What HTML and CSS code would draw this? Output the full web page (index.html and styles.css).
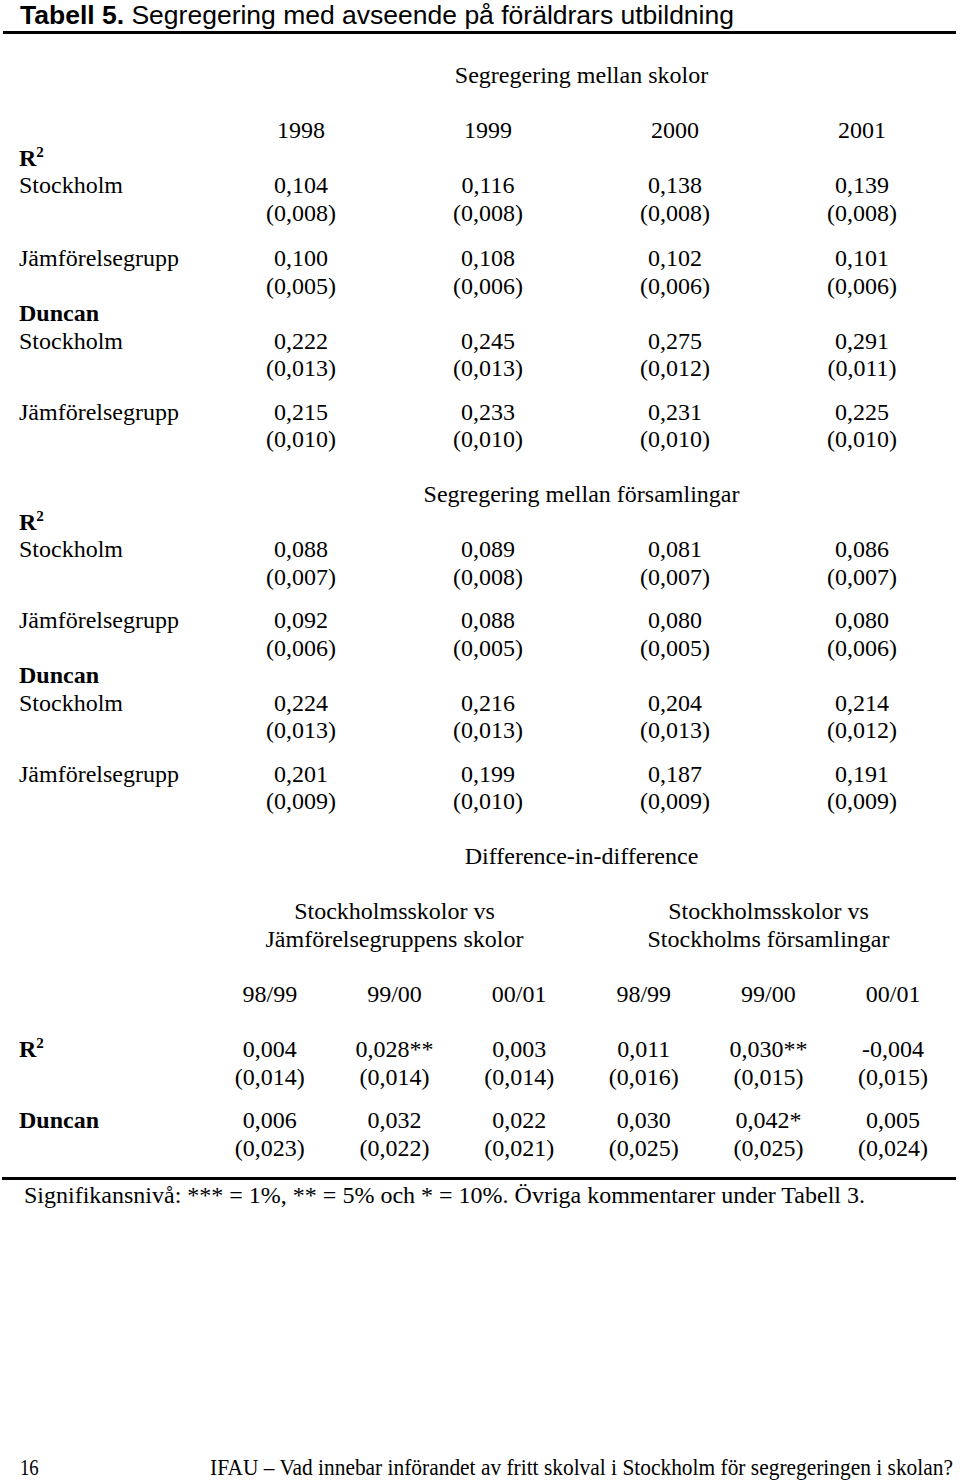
FILE: index.html
```html
<!DOCTYPE html>
<html lang="sv">
<head>
<meta charset="utf-8">
<title>Tabell 5</title>
<link rel="stylesheet" href="styles.css">
</head>
<body>
<div class="page">
  <h1 class="title"><b>Tabell 5.</b> Segregering med avseende på föräldrars utbildning</h1>

  <div class="r4 sechead mt28"><div></div><div class="span4">Segregering mellan skolor</div></div>
  <div class="r4 mt27"><div></div><div class="v">1998</div><div class="v">1999</div><div class="v">2000</div><div class="v">2001</div></div>
  <div class="r4"><div class="lab b">R<sup>2</sup></div></div>
  <div class="r4"><div class="lab">Stockholm</div><div class="v">0,104<br>(0,008)</div><div class="v">0,116<br>(0,008)</div><div class="v">0,138<br>(0,008)</div><div class="v">0,139<br>(0,008)</div></div>
  <div class="r4 mt18"><div class="lab">Jämförelsegrupp</div><div class="v">0,100<br>(0,005)</div><div class="v">0,108<br>(0,006)</div><div class="v">0,102<br>(0,006)</div><div class="v">0,101<br>(0,006)</div></div>
  <div class="r4"><div class="lab b">Duncan</div></div>
  <div class="r4"><div class="lab">Stockholm</div><div class="v">0,222<br>(0,013)</div><div class="v">0,245<br>(0,013)</div><div class="v">0,275<br>(0,012)</div><div class="v">0,291<br>(0,011)</div></div>
  <div class="r4 mt16"><div class="lab">Jämförelsegrupp</div><div class="v">0,215<br>(0,010)</div><div class="v">0,233<br>(0,010)</div><div class="v">0,231<br>(0,010)</div><div class="v">0,225<br>(0,010)</div></div>

  <div class="r4 sechead mt27"><div></div><div class="span4">Segregering mellan församlingar</div></div>
  <div class="r4"><div class="lab b">R<sup>2</sup></div></div>
  <div class="r4"><div class="lab">Stockholm</div><div class="v">0,088<br>(0,007)</div><div class="v">0,089<br>(0,008)</div><div class="v">0,081<br>(0,007)</div><div class="v">0,086<br>(0,007)</div></div>
  <div class="r4 mt16"><div class="lab">Jämförelsegrupp</div><div class="v">0,092<br>(0,006)</div><div class="v">0,088<br>(0,005)</div><div class="v">0,080<br>(0,005)</div><div class="v">0,080<br>(0,006)</div></div>
  <div class="r4"><div class="lab b">Duncan</div></div>
  <div class="r4"><div class="lab">Stockholm</div><div class="v">0,224<br>(0,013)</div><div class="v">0,216<br>(0,013)</div><div class="v">0,204<br>(0,013)</div><div class="v">0,214<br>(0,012)</div></div>
  <div class="r4 mt16"><div class="lab">Jämförelsegrupp</div><div class="v">0,201<br>(0,009)</div><div class="v">0,199<br>(0,010)</div><div class="v">0,187<br>(0,009)</div><div class="v">0,191<br>(0,009)</div></div>

  <div class="r4 sechead mt27"><div></div><div class="span4">Difference-in-difference</div></div>
  <div class="r2 mt27"><div></div><div class="v">Stockholmsskolor vs<br>Jämförelsegruppens skolor</div><div class="v">Stockholmsskolor vs<br>Stockholms församlingar</div></div>
  <div class="r6 mt28"><div></div><div class="v">98/99</div><div class="v">99/00</div><div class="v">00/01</div><div class="v">98/99</div><div class="v">99/00</div><div class="v">00/01</div></div>
  <div class="r6 mt27"><div class="lab b">R<sup>2</sup></div><div class="v">0,004<br>(0,014)</div><div class="v">0,028**<br>(0,014)</div><div class="v">0,003<br>(0,014)</div><div class="v">0,011<br>(0,016)</div><div class="v">0,030**<br>(0,015)</div><div class="v">-0,004<br>(0,015)</div></div>
  <div class="r6 mt16"><div class="lab b">Duncan</div><div class="v">0,006<br>(0,023)</div><div class="v">0,032<br>(0,022)</div><div class="v">0,022<br>(0,021)</div><div class="v">0,030<br>(0,025)</div><div class="v">0,042*<br>(0,025)</div><div class="v">0,005<br>(0,024)</div></div>

  <div class="rule"></div>
  <p class="note">Signifikansnivå: *** = 1%, ** = 5% och * = 10%. Övriga kommentarer under Tabell 3.</p>

  <div class="footer">
    <span class="pageno">16</span>
    <span class="running">IFAU – Vad innebar införandet av fritt skolval i Stockholm för segregeringen i skolan?</span>
  </div>
</div>
</body>
</html>
```
FILE: styles.css
```css
html, body {
  margin: 0;
  padding: 0;
  background: #fff;
}
body {
  width: 960px;
  height: 1481px;
  overflow: hidden;
  color: #000;
  font-family: "Liberation Serif", "Times New Roman", serif;
  font-size: 24px;
  line-height: 27.5px;
}
.page {
  margin-left: 3px;
  width: 953px;
}
.title {
  margin: 0;
  padding: 0 0 0 17px;
  height: 31px;
  font-family: "Liberation Sans", Arial, sans-serif;
  font-weight: normal;
  font-size: 26.5px;
  line-height: 31px;
  border-bottom: 3px solid #000;
  white-space: nowrap;
}
.title b { font-weight: bold; }

.r4, .r6, .r2 {
  display: grid;
}
.r4 { grid-template-columns: 204.5px repeat(4, 187px); }
.r6 { grid-template-columns: 204.5px repeat(6, 124.667px); }
.r2 { grid-template-columns: 204.5px repeat(2, 374px); }

.span4 {
  grid-column: 2 / span 4;
  text-align: center;
}
.lab {
  padding-left: 16px;
  white-space: nowrap;
}
.b { font-weight: bold; }
.v {
  text-align: center;
  white-space: nowrap;
}
sup {
  font-size: 15px;
  line-height: 0;
  vertical-align: 9px;
  font-weight: bold;
}
.mt16 { margin-top: 16px; }
.mt18 { margin-top: 18px; }
.mt27 { margin-top: 27.5px; }
.mt28 { margin-top: 28px; }

.rule {
  margin-top: 15px;
  height: 0;
  border-top: 3px solid #000;
  width: 954px;
  margin-left: -1px;
}
.note {
  margin: 2px 0 0 21px;
  white-space: nowrap;
}
.footer {
  margin-top: 244px;
  display: flex;
  align-items: center;
  white-space: nowrap;
}
.pageno {
  flex: 0 0 190px;
  padding-left: 17px;
  transform: scaleX(0.78);
  transform-origin: 17px 50%;
}
.running {
  flex: 0 0 auto;
  transform: scaleX(0.892);
  transform-origin: 0 50%;
}
```
